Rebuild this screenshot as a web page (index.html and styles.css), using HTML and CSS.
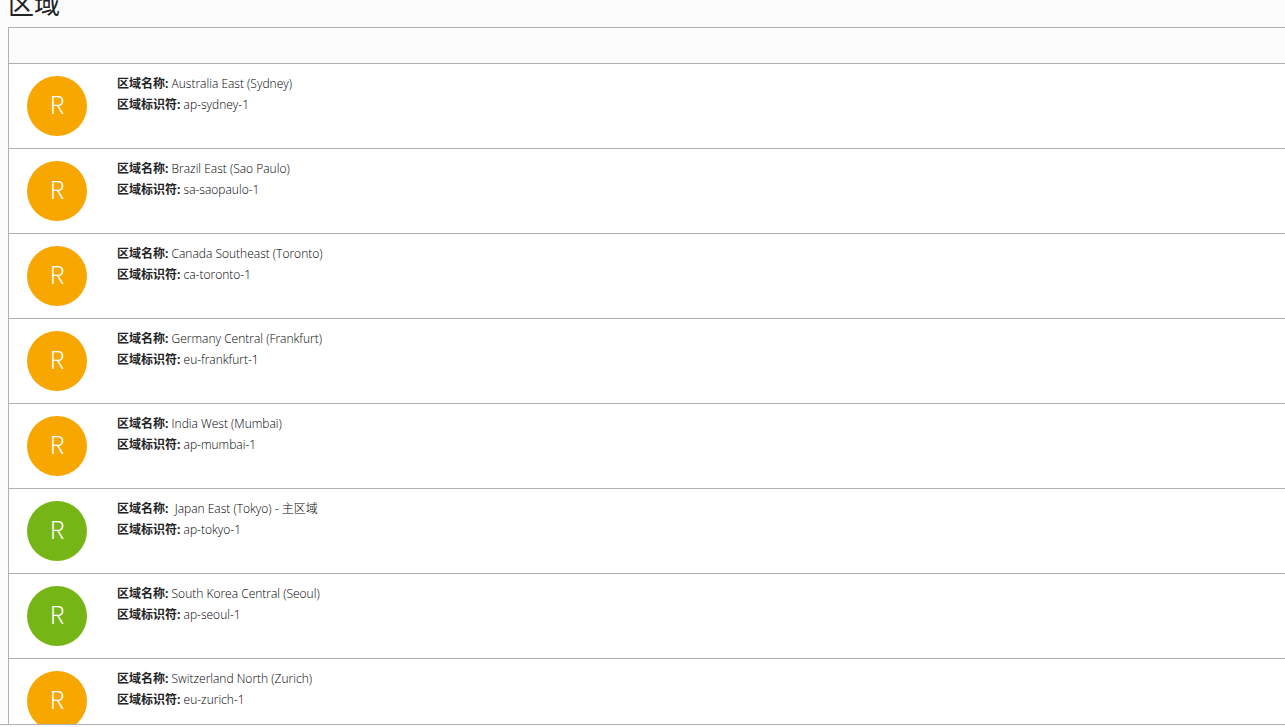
FILE: index.html
```html
<!DOCTYPE html>
<html lang="zh-CN">
<head>
    <meta charset="UTF-8">
    <meta name="viewport" content="width=device-width, initial-scale=1.0">
    <title>区域</title>
    <link rel="stylesheet" href="styles.css">
</head>
<body>
    <main class="content">
        <h1 class="page-title">区域</h1>
        <div class="region-list">
            <div class="list-header"></div>
            <div class="region-item">
                <div class="region-icon">R</div>
                <div class="region-details">
                    <p><strong>区域名称:</strong> Australia East (Sydney)</p>
                    <p><strong>区域标识符:</strong> ap-sydney-1</p>
                </div>
            </div>
            <div class="region-item">
                <div class="region-icon">R</div>
                <div class="region-details">
                    <p><strong>区域名称:</strong> Brazil East (Sao Paulo)</p>
                    <p><strong>区域标识符:</strong> sa-saopaulo-1</p>
                </div>
            </div>
            <div class="region-item">
                <div class="region-icon">R</div>
                <div class="region-details">
                    <p><strong>区域名称:</strong> Canada Southeast (Toronto)</p>
                    <p><strong>区域标识符:</strong> ca-toronto-1</p>
                </div>
            </div>
            <div class="region-item">
                <div class="region-icon">R</div>
                <div class="region-details">
                    <p><strong>区域名称:</strong> Germany Central (Frankfurt)</p>
                    <p><strong>区域标识符:</strong> eu-frankfurt-1</p>
                </div>
            </div>
            <div class="region-item">
                <div class="region-icon">R</div>
                <div class="region-details">
                    <p><strong>区域名称:</strong> India West (Mumbai)</p>
                    <p><strong>区域标识符:</strong> ap-mumbai-1</p>
                </div>
            </div>
            <div class="region-item">
                <div class="region-icon subscribed">R</div>
                <div class="region-details">
                    <p><strong>区域名称:</strong>&nbsp; Japan East (Tokyo) - 主区域</p>
                    <p><strong>区域标识符:</strong> ap-tokyo-1</p>
                </div>
            </div>
            <div class="region-item">
                <div class="region-icon subscribed">R</div>
                <div class="region-details">
                    <p><strong>区域名称:</strong> South Korea Central (Seoul)</p>
                    <p><strong>区域标识符:</strong> ap-seoul-1</p>
                </div>
            </div>
            <div class="region-item">
                <div class="region-icon">R</div>
                <div class="region-details">
                    <p><strong>区域名称:</strong> Switzerland North (Zurich)</p>
                    <p><strong>区域标识符:</strong> eu-zurich-1</p>
                </div>
            </div>
        </div>
    </main>
    <footer class="page-footer"></footer>
</body>
</html>
```
FILE: styles.css
```css
* {
    box-sizing: border-box;
}
body {
    display: flex;
    flex-direction: column;
    height: 100vh;
    margin: 0;
    overflow: hidden;
    font-family: "Open Sans", "Noto Sans CJK SC", sans-serif;
    font-size: 12px;
    font-weight: 300;
    line-height: 21px;
    background-color: #fcfcfc;
    color: #000;
}
.content {
    flex: 1;
    min-height: 0;
    padding-left: 8px;
    overflow: hidden;
}
.page-title {
    margin: -14px 0 5px;
    font-size: 26px;
    font-weight: 400;
    line-height: 36px;
    color: #222;
}
.region-list {
    border: 1px solid #b0b0b0;
    border-right: none;
}
.list-header {
    height: 35px;
}
.region-item {
    display: flex;
    gap: 30px;
    padding: 9px 18px 12px;
    border-top: 1px solid #b0b0b0;
    background-color: #fff;
}
.region-icon {
    width: 60px;
    height: 60px;
    margin-top: 3px;
    border-radius: 50%;
    background-color: #f8a600;
    color: #fff;
    font-family: "Noto Sans CJK SC", sans-serif;
    font-size: 24px;
    line-height: 56px;
    text-align: center;
}
.region-icon.subscribed {
    background-color: #76b516;
}
.region-details p {
    margin: 0;
}
.region-details strong {
    font-weight: 700;
    color: #222;
}
.page-footer {
    height: 3px;
    border-top: 1px solid #b0b0b0;
}
```
